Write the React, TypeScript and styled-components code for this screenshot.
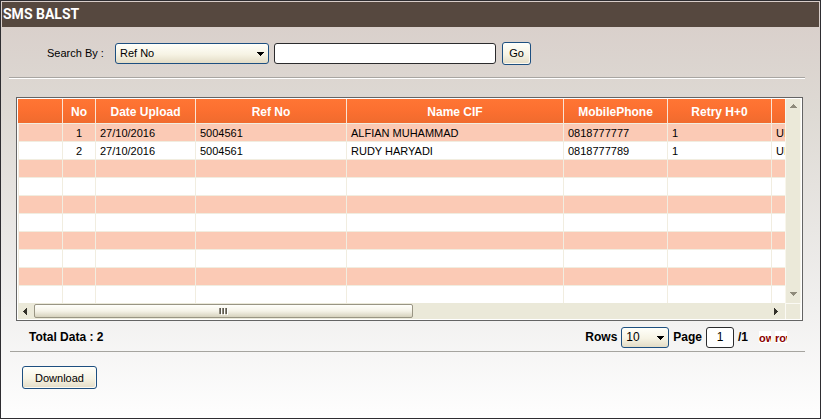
import React from "react";
import styled, { createGlobalStyle, css } from "styled-components";

const GlobalStyle = createGlobalStyle`
  *, *::before, *::after { box-sizing: border-box; }
  html, body, #root { height: 100%; }
  body {
    margin: 0;
    font: 11px/16px "Liberation Sans", Arial, sans-serif;
    color: #000;
  }
  button, input, select { font: inherit; color: inherit; }
`;

const control = css`
  border: 1px solid #1d4f80;
  border-radius: 3px;
  background: linear-gradient(#fffffa, #f6f3e4 55%, #e3dcc6);
`;

const Page = styled.div`
  display: flex;
  flex-direction: column;
  min-height: 100%;
  padding: 1px;
  border: 1px solid #2e2d31;
  background: linear-gradient(#d8cdc9, #dedad4 27%, #f0efee 72%, #fefefe);
`;

const TitleBar = styled.h1`
  margin: 0;
  padding: 0 1px;
  background: #56483f;
  color: #fff;
  font-family: Roboto, "Liberation Sans", sans-serif;
  font-size: 14px;
  line-height: 25px;
`;

const SearchBar = styled.form`
  display: flex;
  align-items: center;
  height: 51px;
  margin: 0 14px 0 7px;
  padding: 2px 0 0 38px;
  border-bottom: 1px solid #a8a5a1;
  box-shadow: 0 1px #fff;
`;

const SearchLabel = styled.label`
  width: 68px;
`;

const SelectBox = styled.span<{ $width: number }>`
  position: relative;
  display: inline-flex;
  width: ${(p) => p.$width}px;

  svg {
    position: absolute;
    right: 4px;
    top: 9px;
    pointer-events: none;
  }
`;

const Select = styled.select`
  ${control}
  appearance: none;
  width: 100%;
  height: 21px;
  padding: 0 16px 0 4px;
`;

const TextInput = styled.input<{ $width: number; $center?: boolean }>`
  width: ${(p) => p.$width}px;
  height: 21px;
  padding: 0 4px;
  border: 1px solid #2b2b2d;
  border-radius: 3px;
  background: #fff;
  text-align: ${(p) => (p.$center ? "center" : "left")};
`;

const SearchInput = styled(TextInput)`
  margin: 0 6px 0 5px;
`;

const Button = styled.button<{ $width: number }>`
  ${control}
  width: ${(p) => p.$width}px;
  height: 23px;
  padding: 0;
  box-shadow: inset -1px -1px #fbf9f1;
`;

const GridFrame = styled.div`
  display: grid;
  grid-template-columns: minmax(0, 1fr) 16px;
  margin: 19px 16px 0 14px;
  padding: 1px;
  border: 1px solid #646464;
  background: #fff;
`;

const Viewport = styled.div`
  overflow: hidden;
  height: 204px;
`;

const Table = styled.table`
  width: 916px;
  table-layout: fixed;
  border-collapse: separate;
  border-spacing: 0;
`;

const HeadCell = styled.th`
  height: 25px;
  padding: 2px 0 0;
  border-right: 1px solid #f9e4d5;
  border-bottom: 1px solid #f1ede0;
  background: linear-gradient(#ff7534, #fb6f30 50%, #f06b2e);
  background-clip: padding-box;
  color: #fff;
  font-size: 12px;
  line-height: 16px;
`;

const Row = styled.tr`
  background: #fff;
  &:nth-child(odd) { background: #fbcab5; }
`;

const Cell = styled.td<{ $center?: boolean }>`
  height: 18px;
  padding: 1px 4px 0;
  border-right: 1px solid #f1ede0;
  border-bottom: 1px solid #f1ede0;
  line-height: 16px;
  white-space: nowrap;
  text-align: ${(p) => (p.$center ? "center" : "left")};
  &:first-child { border-left: 1px solid #f1ede0; }
`;

const VerticalBar = styled.div`
  display: flex;
  flex-direction: column;
  justify-content: space-between;
  padding-bottom: 2px;
  border-left: 1px solid #f8f6ec;
  border-right: 1px solid #f8f6ec;
  background: #ebe9d9;
`;

const HorizontalBar = styled.div`
  display: flex;
  height: 16px;
  padding: 1px 0;
  background: #ebe9d9;
`;

const BarCorner = styled.div`
  background: #ebe9d9;
  border: 1px solid #fbfaf4;
  border-bottom: 0;
`;

const ArrowButton = styled.button`
  display: flex;
  flex: none;
  align-items: center;
  justify-content: center;
  width: 16px;
  height: 14px;
  padding: 0 2px 0 0;
  border: 0;
  background: transparent;
`;

const Track = styled.div`
  flex: 1;
  display: flex;
`;

const Thumb = styled.div`
  display: flex;
  align-items: center;
  justify-content: center;
  width: 51.5%;
  height: 14px;
  border: 1px solid #999584;
  border-radius: 2px;
  background: linear-gradient(#fffffb, #f5f3e8 50%, #d6d2bd);
`;

const Footer = styled.div`
  display: flex;
  align-items: center;
  height: 31px;
  margin: 0 14px 0 8px;
  padding: 2px 18px 0 19px;
  border-bottom: 1px solid #a5a49f;
  font-size: 12px;
  font-weight: bold;
`;

const Pager = styled.div`
  display: flex;
  align-items: center;
  gap: 4px;
  margin-left: auto;

  select, input { font-size: 12px; font-weight: normal; }
`;

const PageTotal = styled.span`
  width: 17px;
`;

const PageButton = styled.button`
  display: flex;
  justify-content: flex-start;
  overflow: hidden;
  width: 12px;
  height: 12px;
  padding: 0;
  border: 0;
  background: #fff;
  color: #8b0000;
  font-size: 11px;
  font-weight: bold;
  line-height: 14px;
`;

const Actions = styled.div`
  padding: 14px 20px;
`;

const columns = [
  { title: "", width: 45 },
  { title: "No", width: 33 },
  { title: "Date Upload", width: 100 },
  { title: "Ref No", width: 151 },
  { title: "Name CIF", width: 217 },
  { title: "MobilePhone", width: 104 },
  { title: "Retry H+0", width: 104 },
  { title: "", width: 162 },
];

const records = [
  ["", "1", "27/10/2016", "5004561", "ALFIAN MUHAMMAD", "0818777777", "1", "UI"],
  ["", "2", "27/10/2016", "5004561", "RUDY HARYADI", "0818777789", "1", "UI"],
];

const rows = Array.from({ length: 10 }, (_, i) => records[i] ?? columns.map(() => ""));

const DropArrow = () => (
  <svg width="8" height="5" viewBox="0 0 8 5" shapeRendering="crispEdges" aria-hidden="true">
    <path d="M0 0h7v1h-1v1h-1v1h-1v1h-1v-1h-1v-1h-1v-1h-1z" fill="#000" />
  </svg>
);

const arrowPaths = {
  up: "M3 0h1v1h1v1h1v1h1v1H0V3h1V2h1V1h1z",
  down: "M0 0h7v1H6v1H5v1H4v1H3V3H2V2H1V1H0z",
  left: "M3 0h1v7H3V6H2V5H1V4H0V3h1V2h1V1h1z",
  right: "M0 0h1v1h1v1h1v1h1v1H3v1H2v1H1v1H0z",
};

const BarArrow = ({ to, color }: { to: keyof typeof arrowPaths; color: string }) => (
  <svg width="7" height="7" viewBox={to === "up" || to === "down" ? "0 -1 7 7" : "-1 0 7 7"} shapeRendering="crispEdges" aria-hidden="true">
    <path d={arrowPaths[to]} fill={color} />
  </svg>
);

const Grip = () => (
  <svg width="9" height="7" viewBox="0 0 9 7" shapeRendering="crispEdges" aria-hidden="true">
    <path d="M2.5 1v6M5.5 1v6M8.5 1v6" stroke="#fff" />
    <path d="M.5 0v6M3.5 0v6M6.5 0v6" stroke="#8d897c" />
    <path d="M1.5 0v6M4.5 0v6M7.5 0v6" stroke="#5d5a50" />
  </svg>
);

export default function App() {
  return (
    <>
      <GlobalStyle />
      <Page>
        <TitleBar>SMS BALST</TitleBar>
        <SearchBar onSubmit={(e) => e.preventDefault()}>
          <SearchLabel htmlFor="search-by">Search By :</SearchLabel>
          <SelectBox $width={154}>
            <Select id="search-by">
              <option>Ref No</option>
              <option>Name CIF</option>
            </Select>
            <DropArrow />
          </SelectBox>
          <SearchInput $width={222} type="text" aria-label="Search text" />
          <Button $width={29} type="submit">Go</Button>
        </SearchBar>
        <GridFrame>
          <Viewport>
            <Table>
              <colgroup>
                {columns.map((c, i) => (
                  <col key={i} width={c.width} />
                ))}
              </colgroup>
              <thead>
                <tr>
                  {columns.map((c, i) => (
                    <HeadCell key={i} scope="col">{c.title}</HeadCell>
                  ))}
                </tr>
              </thead>
              <tbody>
                {rows.map((row, r) => (
                  <Row key={r}>
                    {row.map((value, i) => (
                      <Cell key={i} $center={i === 1}>{value}</Cell>
                    ))}
                  </Row>
                ))}
              </tbody>
            </Table>
          </Viewport>
          <VerticalBar>
            <ArrowButton type="button" aria-label="Scroll up"><BarArrow to="up" color="#8f8b7b" /></ArrowButton>
            <ArrowButton type="button" aria-label="Scroll down"><BarArrow to="down" color="#8f8b7b" /></ArrowButton>
          </VerticalBar>
          <HorizontalBar>
            <ArrowButton type="button" aria-label="Scroll left"><BarArrow to="left" color="#33312a" /></ArrowButton>
            <Track>
              <Thumb><Grip /></Thumb>
            </Track>
            <ArrowButton type="button" aria-label="Scroll right"><BarArrow to="right" color="#33312a" /></ArrowButton>
          </HorizontalBar>
          <BarCorner />
        </GridFrame>
        <Footer>
          <span>Total Data : 2</span>
          <Pager>
            <label htmlFor="rows">Rows</label>
            <SelectBox $width={48}>
              <Select id="rows">
                <option>10</option>
                <option>20</option>
              </Select>
              <DropArrow />
            </SelectBox>
            <label htmlFor="page">Page</label>
            <TextInput id="page" $width={28} $center type="text" defaultValue="1" />
            <PageTotal>/1</PageTotal>
            <PageButton type="button" aria-label="Previous page">ow</PageButton>
            <PageButton type="button" aria-label="Next page">row</PageButton>
          </Pager>
        </Footer>
        <Actions>
          <Button $width={75} type="button">Download</Button>
        </Actions>
      </Page>
    </>
  );
}
